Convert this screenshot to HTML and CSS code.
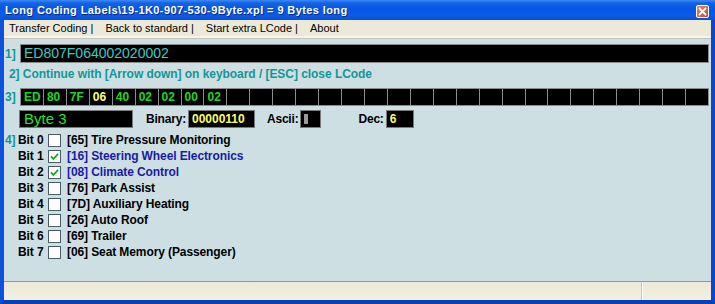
FILE: index.html
```html
<!DOCTYPE html>
<html lang="en">
<head>
    <meta charset="UTF-8">
    <title>Long Coding Labels</title>
    <link rel="stylesheet" href="styles.css">
</head>
<body>
    <div class="window">
        <div class="titlebar">
            <span class="title">Long Coding Labels\19-1K0-907-530-9Byte.xpl = 9 Bytes long</span>
            <span class="close-btn">
                <svg width="13" height="13" viewBox="0 0 13 13">
                    <path d="M3.5 3.5 L9.5 9.5 M9.5 3.5 L3.5 9.5" stroke="#fff" stroke-width="1.8" stroke-linecap="round"/>
                </svg>
            </span>
        </div>

        <div class="frame">
            <div class="menubar">
                <span>Transfer Coding |</span>
                <span>Back to standard |</span>
                <span>Start extra LCode |</span>
                <span>About</span>
            </div>

            <div class="content">
                <div class="row row-code">
                    <span class="step">1]</span>
                    <div class="code-box">ED807F064002020002</div>
                </div>

                <div class="row row-hint">
                    <span class="hint">2] Continue with [Arrow down] on keyboard / [ESC] close LCode</span>
                </div>

                <div class="row row-bytes">
                    <span class="step">3]</span>
                    <div class="byte-grid" id="byte-grid"></div>
                </div>

                <div class="row row-info">
                    <div class="byte-name">Byte 3</div>
                    <span class="field-label label-binary">Binary:</span>
                    <div class="field-box box-binary">00000110</div>
                    <span class="field-label label-ascii">Ascii:</span>
                    <div class="field-box box-ascii"><span class="cursor"></span></div>
                    <span class="field-label label-dec">Dec:</span>
                    <div class="field-box box-dec">6</div>
                </div>

                <div class="bits" id="bits"></div>
            </div>

            <div class="statusbar">
                <div class="status-main"></div>
                <div class="status-side"></div>
            </div>
        </div>
    </div>

    <script>
        const bytes = ['ED', '80', '7F', '06', '40', '02', '02', '00', '02'];
        const grid = document.getElementById('byte-grid');
        for (let i = 0; i < 30; i++) {
            const cell = document.createElement('div');
            cell.className = 'byte-cell';
            if (i === 3) cell.classList.add('current');
            cell.textContent = bytes[i] || '';
            grid.appendChild(cell);
        }

        const bits = [
            { id: '65', name: 'Tire Pressure Monitoring', on: false },
            { id: '16', name: 'Steering Wheel Electronics', on: true },
            { id: '08', name: 'Climate Control', on: true },
            { id: '76', name: 'Park Assist', on: false },
            { id: '7D', name: 'Auxiliary Heating', on: false },
            { id: '26', name: 'Auto Roof', on: false },
            { id: '69', name: 'Trailer', on: false },
            { id: '06', name: 'Seat Memory (Passenger)', on: false }
        ];
        const check = '<svg width="9" height="9" viewBox="0 0 9 9"><path d="M1 4.5 L3.5 7 L8 1.8" fill="none" stroke="#21a121" stroke-width="1.8"/></svg>';
        const list = document.getElementById('bits');
        bits.forEach((bit, i) => {
            const row = document.createElement('div');
            row.className = 'bit-row' + (bit.on ? ' checked' : '');
            row.innerHTML = `
                <span class="step">${i === 0 ? '4]' : ''}</span>
                <span class="bit-no">Bit ${i}</span>
                <span class="checkbox">${bit.on ? check : ''}</span>
                <span class="bit-name">[${bit.id}] ${bit.name}</span>
            `;
            list.appendChild(row);
        });
    </script>
</body>
</html>
```

FILE: styles.css
```css
* {
    margin: 0;
    padding: 0;
    box-sizing: border-box;
}

body {
    width: 715px;
    height: 304px;
    overflow: hidden;
    font-family: 'Liberation Sans', Arial, sans-serif;
}

.window {
    display: flex;
    flex-direction: column;
    height: 304px;
}

.titlebar {
    height: 20px;
    display: flex;
    align-items: center;
    justify-content: space-between;
    padding: 0 6px 0 5px;
    background: linear-gradient(to bottom, #3d8af5 0%, #1463e6 15%, #0756e4 45%, #0a5ae8 80%, #0b4fd4 100%);
}

.title {
    color: #fff;
    font-size: 11px;
    font-weight: bold;
    letter-spacing: 0.4px;
    text-shadow: 1px 1px 0 #0a2a86;
}

.close-btn {
    width: 13px;
    height: 13px;
    margin-top: 3px;
    border: 1px solid #fff;
    border-radius: 2px;
    background: linear-gradient(to bottom right, #e8866a, #c94a2a);
    display: flex;
}

.close-btn svg {
    margin: -1px;
}

.frame {
    flex: 1;
    display: flex;
    flex-direction: column;
    border-left: 4px solid #0d52dc;
    border-right: 4px solid #0d46c8;
    border-bottom: 4px solid #0b3fb8;
    background: #ece9d8;
}

.menubar {
    height: 18px;
    display: flex;
    align-items: center;
    gap: 12px;
    padding-left: 5px;
    font-size: 11px;
    color: #000;
    background: #ece9d8;
    border-bottom: 2px solid #f6f4ec;
}

.content {
    flex: 1;
    display: flex;
    flex-direction: column;
    background: #cddfe3;
    padding: 5px 2px 0 1px;
    border-top: 1px solid #c6c3b6;
}

.row {
    display: flex;
    align-items: center;
}

.step {
    width: 15px;
    color: #139696;
    font-size: 12px;
    font-weight: bold;
}

.code-box {
    flex: 1;
    height: 19px;
    background: #000;
    border: 1px solid #8c8c8c;
    color: #42c8c2;
    font-size: 14px;
    line-height: 17px;
    padding-left: 3px;
}

.row-hint {
    height: 16px;
    margin-top: 3px;
}

.hint {
    padding-left: 4px;
    color: #139696;
    font-size: 12px;
    font-weight: bold;
    letter-spacing: -0.05px;
}

.row-bytes {
    margin-top: 6px;
}

.byte-grid {
    flex: 1;
    display: grid;
    grid-template-columns: repeat(30, 1fr);
    height: 18px;
    background: #000;
    border: 1px solid #8c8c8c;
    border-right: none;
}

.byte-cell {
    border-right: 1px solid #8c8c8c;
    color: #22d622;
    font-size: 12px;
    font-weight: bold;
    line-height: 16px;
    padding-left: 3px;
}

.byte-cell.current {
    color: #ffff78;
}

.row-info {
    margin-top: 4px;
    height: 18px;
}

.byte-name {
    margin-left: 14px;
    width: 114px;
    height: 18px;
    background: #000;
    border: 1px solid #7a7a7a;
    color: #2ee02e;
    font-size: 15px;
    line-height: 16px;
    padding-left: 4px;
}

.field-label {
    font-size: 12px;
    font-weight: bold;
    color: #000;
    letter-spacing: -0.2px;
}

.label-binary {
    margin-left: 13px;
}

.label-ascii {
    margin-left: 12px;
}

.label-dec {
    margin-left: 37px;
}

.field-box {
    height: 18px;
    margin-left: 2px;
    background: #000;
    border: 1px solid #7a7a7a;
    color: #ffff64;
    font-size: 12px;
    font-weight: bold;
    line-height: 16px;
    padding-left: 3px;
}

.box-binary {
    width: 67px;
}

.box-ascii {
    width: 21px;
    display: flex;
    align-items: center;
}

.cursor {
    width: 4px;
    height: 10px;
    background: #9a9a9a;
}

.box-dec {
    width: 28px;
}

.bits {
    margin-top: 4px;
    display: flex;
    flex-direction: column;
}

.bit-row {
    height: 16px;
    display: flex;
    align-items: center;
    font-size: 12px;
    font-weight: bold;
    letter-spacing: -0.1px;
}

.bit-row .step {
    width: 13px;
}

.bit-no {
    width: 30px;
    color: #000;
}

.checkbox {
    width: 13px;
    height: 13px;
    background: #fff;
    border: 1px solid #4a5c6a;
    display: flex;
    align-items: center;
    justify-content: center;
}

.bit-name {
    margin-left: 6px;
    color: #000;
}

.bit-row.checked .bit-name {
    color: #1a1aa6;
}

.statusbar {
    height: 19px;
    display: flex;
    border-top: 1px solid #8f9a8f;
    background: linear-gradient(to bottom, #ece9d8, #f3f0e2);
}

.status-main {
    width: 638px;
    border-right: 1px solid #c8c5b8;
}

.status-side {
    flex: 1;
    border-left: 1px solid #fff;
}
```
